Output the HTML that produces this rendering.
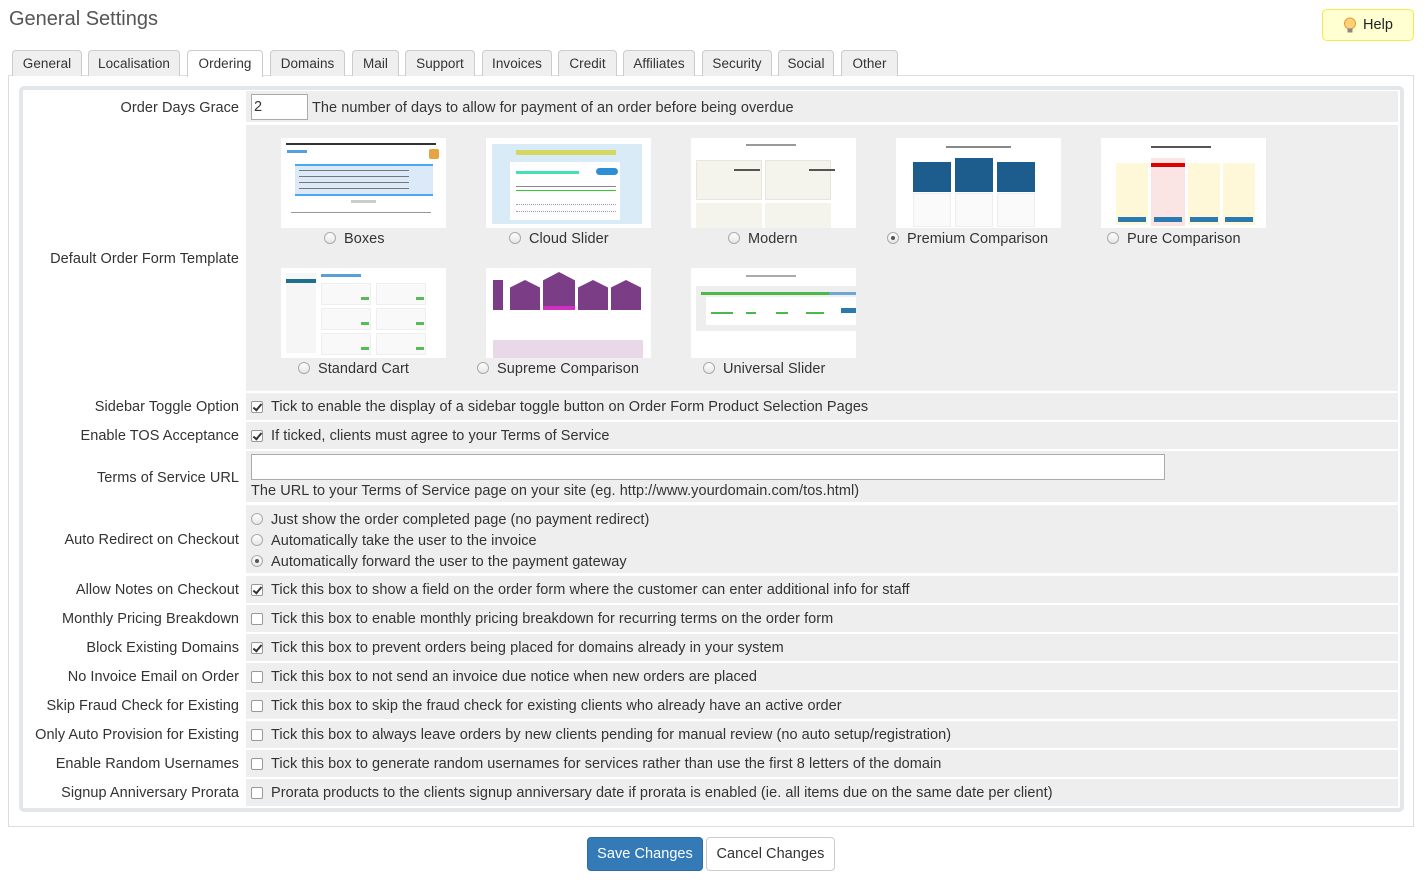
<!DOCTYPE html>
<html><head><meta charset="utf-8">
<style>
*{box-sizing:border-box;margin:0;padding:0}
body{width:1425px;height:882px;background:#fff;font-family:"Liberation Sans",sans-serif;font-size:14px;color:#333;position:relative;overflow:hidden;letter-spacing:0.05px}
.a{position:absolute}
h1{position:absolute;left:9px;top:8px;font-size:20px;font-weight:normal;color:#555;letter-spacing:0}
.help{position:absolute;left:1322px;top:9px;width:92px;height:32px;border:1px solid #f5e94a;background:#ffffd2;border-radius:5px;font-size:14.5px;color:#222;padding:7px 0 0 40px}
.tab{position:absolute;top:50px;height:26px;border:1px solid #ccc;border-bottom:none;background:#efefef;border-radius:4px 4px 0 0;text-align:center;font-size:13.5px;line-height:25px;color:#333}
.tab.on{background:#fff;height:27px;top:50px;z-index:2}
.panel{position:absolute;left:8px;top:75px;width:1406px;height:752px;border:1px solid #ddd}
.box{position:absolute;left:19px;top:86px;width:1385px;height:726px;border:4px solid #e3e7ea;border-radius:5px}
.lab{position:absolute;left:22px;width:217px;text-align:right;font-size:14.5px;color:#333;padding-top:2px}
.cell{position:absolute;left:246px;width:1152px;background:#eee}
.t{position:absolute;left:271px;font-size:14.5px;color:#333;white-space:nowrap;padding-top:2px}
.cb{position:absolute;left:251px;width:12px;height:12px;border:1px solid #999;border-radius:2px;background:#fff}
.cb.c::after{content:"";position:absolute;left:3px;top:0px;width:3px;height:7px;border:solid #333;border-width:0 2px 2px 0;transform:rotate(40deg)}
.rd{position:absolute;width:12px;height:12px;border:1px solid #aaa;border-radius:50%;background:linear-gradient(#fff,#e6e6e6)}
.rd.c::after{content:"";position:absolute;left:3px;top:3px;width:4px;height:4px;border-radius:50%;background:#555}
.th{position:absolute;width:165px;height:90px;background:#fff;overflow:hidden}
.tl{position:absolute;font-size:14.5px;color:#333;white-space:nowrap;padding-top:2px}
.btn{position:absolute;top:837px;height:34px;border-radius:4px;font-size:14.5px;line-height:32px;text-align:center}
</style></head><body>
<h1>General Settings</h1>
<div class="help"><svg class="a" style="left:20px;top:7px" width="14" height="17" viewBox="0 0 14 17"><circle cx="7" cy="6.5" r="5.5" fill="#ffd27a" stroke="#e89a2a"/><rect x="4.5" y="11.5" width="5" height="4" fill="#888"/></svg>Help</div>

<div class="panel"></div>
<div class="tab" style="left:12px;width:70px">General</div>
<div class="tab" style="left:88px;width:92px">Localisation</div>
<div class="tab on" style="left:187px;width:76px">Ordering</div>
<div class="tab" style="left:270px;width:75px">Domains</div>
<div class="tab" style="left:352px;width:47px">Mail</div>
<div class="tab" style="left:405px;width:70px">Support</div>
<div class="tab" style="left:482px;width:70px">Invoices</div>
<div class="tab" style="left:558px;width:59px">Credit</div>
<div class="tab" style="left:623px;width:72px">Affiliates</div>
<div class="tab" style="left:702px;width:70px">Security</div>
<div class="tab" style="left:778px;width:56px">Social</div>
<div class="tab" style="left:841px;width:57px">Other</div>

<div class="box"></div>

<div class="cell" style="top:91px;height:31px"></div>
<div class="lab" style="top:98px">Order Days Grace</div>
<div class="a" style="left:251px;top:94px;width:57px;height:26px;border:1px solid #aaa;background:#fff;font-size:14.5px;padding:4px 0 0 2px">2</div>
<div class="t" style="left:312px;top:98px">The number of days to allow for payment of an order before being overdue</div>

<div class="cell" style="top:125px;height:266px"></div>
<div class="lab" style="top:249px">Default Order Form Template</div>

<div class="th" style="left:281px;top:138px">
 <div class="a" style="left:5px;top:5px;width:150px;height:2px;background:#333"></div>
 <div class="a" style="left:6px;top:12px;width:20px;height:3px;background:#5aa0d8"></div>
 <div class="a" style="left:148px;top:11px;width:10px;height:10px;background:#e8a440;border-radius:2px"></div>
 <div class="a" style="left:14px;top:26px;width:138px;height:32px;background:#dbe9f8;border-top:2px solid #49a8ef;border-bottom:2px solid #49a8ef"></div>
 <div class="a" style="left:18px;top:32px;width:110px;height:1px;background:#777"></div>
 <div class="a" style="left:18px;top:38px;width:110px;height:1px;background:#777"></div>
 <div class="a" style="left:18px;top:44px;width:110px;height:1px;background:#777"></div>
 <div class="a" style="left:18px;top:50px;width:110px;height:1px;background:#777"></div>
 <div class="a" style="left:70px;top:62px;width:25px;height:3px;background:#ccc"></div>
 <div class="a" style="left:10px;top:74px;width:140px;height:1px;background:#999"></div>
</div>
<div class="rd" style="left:324px;top:232px"></div><div class="tl" style="left:344px;top:229px">Boxes</div>

<div class="th" style="left:486px;top:138px">
 <div class="a" style="left:6px;top:6px;width:150px;height:80px;background:#d9ebf7"></div>
 <div class="a" style="left:30px;top:12px;width:100px;height:5px;background:#d4d860"></div>
 <div class="a" style="left:24px;top:24px;width:110px;height:58px;background:#fff"></div>
 <div class="a" style="left:30px;top:33px;width:63px;height:3px;background:#47e0b0"></div>
 <div class="a" style="left:110px;top:30px;width:22px;height:7px;background:#2d8fd6;border-radius:4px"></div>
 <div class="a" style="left:30px;top:48px;width:100px;height:1px;background:#888"></div>
 <div class="a" style="left:30px;top:52px;width:100px;height:1px;background:#3c3"></div>
 <div class="a" style="left:30px;top:66px;width:100px;height:8px;border-top:1px dotted #99c;border-bottom:1px dotted #99c"></div>
</div>
<div class="rd" style="left:509px;top:232px"></div><div class="tl" style="left:529px;top:229px">Cloud Slider</div>

<div class="th" style="left:691px;top:138px">
 <div class="a" style="left:55px;top:6px;width:50px;height:2px;background:#999"></div>
 <div class="a" style="left:5px;top:22px;width:66px;height:40px;background:#f4f4ec;border:1px solid #e6e6dc"></div>
 <div class="a" style="left:74px;top:22px;width:66px;height:40px;background:#f4f4ec;border:1px solid #e6e6dc"></div>
 <div class="a" style="left:5px;top:65px;width:66px;height:25px;background:#f4f4ec"></div>
 <div class="a" style="left:74px;top:65px;width:66px;height:25px;background:#f4f4ec"></div>
 <div class="a" style="left:43px;top:31px;width:26px;height:2px;background:#555"></div>
 <div class="a" style="left:118px;top:31px;width:26px;height:2px;background:#555"></div>
</div>
<div class="rd" style="left:728px;top:232px"></div><div class="tl" style="left:748px;top:229px">Modern</div>

<div class="th" style="left:896px;top:138px">
 <div class="a" style="left:50px;top:8px;width:65px;height:2px;background:#888"></div>
 <div class="a" style="left:17px;top:24px;width:38px;height:30px;background:#1c5d8e"></div>
 <div class="a" style="left:59px;top:20px;width:38px;height:34px;background:#1c5d8e"></div>
 <div class="a" style="left:101px;top:24px;width:38px;height:30px;background:#1c5d8e"></div>
 <div class="a" style="left:17px;top:55px;width:38px;height:34px;background:#fafafa;border:1px solid #eee"></div>
 <div class="a" style="left:59px;top:55px;width:38px;height:34px;background:#fafafa;border:1px solid #eee"></div>
 <div class="a" style="left:101px;top:55px;width:38px;height:34px;background:#fafafa;border:1px solid #eee"></div>
</div>
<div class="rd c" style="left:887px;top:232px"></div><div class="tl" style="left:907px;top:229px">Premium Comparison</div>

<div class="th" style="left:1101px;top:138px">
 <div class="a" style="left:50px;top:8px;width:60px;height:2px;background:#555"></div>
 <div class="a" style="left:15px;top:25px;width:32px;height:62px;background:#fff8d8"></div>
 <div class="a" style="left:50px;top:20px;width:34px;height:68px;background:#fbe4e4"></div>
 <div class="a" style="left:50px;top:25px;width:34px;height:4px;background:#d00"></div>
 <div class="a" style="left:87px;top:25px;width:32px;height:62px;background:#fff8d8"></div>
 <div class="a" style="left:122px;top:25px;width:32px;height:62px;background:#fff8d8"></div>
 <div class="a" style="left:17px;top:79px;width:28px;height:5px;background:#2a7ab0"></div>
 <div class="a" style="left:53px;top:79px;width:28px;height:5px;background:#2a7ab0"></div>
 <div class="a" style="left:89px;top:79px;width:28px;height:5px;background:#2a7ab0"></div>
 <div class="a" style="left:124px;top:79px;width:28px;height:5px;background:#2a7ab0"></div>
</div>
<div class="rd" style="left:1107px;top:232px"></div><div class="tl" style="left:1127px;top:229px">Pure Comparison</div>

<div class="th" style="left:281px;top:268px">
 <div class="a" style="left:5px;top:5px;width:30px;height:80px;background:#f6f6f6"></div>
 <div class="a" style="left:5px;top:11px;width:30px;height:4px;background:#1f6f8e"></div>
 <div class="a" style="left:40px;top:6px;width:40px;height:3px;background:#5aa0d8"></div>
 <div class="a" style="left:40px;top:15px;width:50px;height:22px;background:#f9f9f9;border:1px solid #eee"></div>
 <div class="a" style="left:95px;top:15px;width:50px;height:22px;background:#f9f9f9;border:1px solid #eee"></div>
 <div class="a" style="left:40px;top:40px;width:50px;height:22px;background:#f9f9f9;border:1px solid #eee"></div>
 <div class="a" style="left:95px;top:40px;width:50px;height:22px;background:#f9f9f9;border:1px solid #eee"></div>
 <div class="a" style="left:40px;top:65px;width:50px;height:22px;background:#f9f9f9;border:1px solid #eee"></div>
 <div class="a" style="left:95px;top:65px;width:50px;height:22px;background:#f9f9f9;border:1px solid #eee"></div>
 <div class="a" style="left:80px;top:29px;width:8px;height:3px;background:#5cb85c"></div>
 <div class="a" style="left:135px;top:29px;width:8px;height:3px;background:#5cb85c"></div>
 <div class="a" style="left:80px;top:54px;width:8px;height:3px;background:#5cb85c"></div>
 <div class="a" style="left:135px;top:54px;width:8px;height:3px;background:#5cb85c"></div>
 <div class="a" style="left:80px;top:79px;width:8px;height:3px;background:#5cb85c"></div>
 <div class="a" style="left:135px;top:79px;width:8px;height:3px;background:#5cb85c"></div>
</div>
<div class="rd" style="left:298px;top:362px"></div><div class="tl" style="left:318px;top:359px">Standard Cart</div>

<div class="th" style="left:486px;top:268px">
 <div class="a" style="left:7px;top:12px;width:10px;height:30px;background:#7b3d86"></div>
 <div class="a" style="left:24px;top:12px;width:30px;height:30px;background:#7b3d86;clip-path:polygon(50% 0,100% 25%,100% 100%,0 100%,0 25%)"></div>
 <div class="a" style="left:57px;top:4px;width:32px;height:38px;background:#7b3d86;clip-path:polygon(50% 0,100% 22%,100% 100%,0 100%,0 22%)"></div>
 <div class="a" style="left:57px;top:38px;width:32px;height:4px;background:#d030c0"></div>
 <div class="a" style="left:92px;top:12px;width:30px;height:30px;background:#7b3d86;clip-path:polygon(50% 0,100% 25%,100% 100%,0 100%,0 25%)"></div>
 <div class="a" style="left:125px;top:12px;width:30px;height:30px;background:#7b3d86;clip-path:polygon(50% 0,100% 25%,100% 100%,0 100%,0 25%)"></div>
 <div class="a" style="left:7px;top:72px;width:150px;height:18px;background:#e9d8e8"></div>
</div>
<div class="rd" style="left:477px;top:362px"></div><div class="tl" style="left:497px;top:359px">Supreme Comparison</div>

<div class="th" style="left:691px;top:268px">
 <div class="a" style="left:55px;top:7px;width:50px;height:2px;background:#aaa"></div>
 <div class="a" style="left:5px;top:18px;width:160px;height:45px;background:#eee"></div>
 <div class="a" style="left:10px;top:24px;width:128px;height:3px;background:#4cb84c"></div>
 <div class="a" style="left:138px;top:24px;width:27px;height:3px;background:#6ca7d6"></div>
 <div class="a" style="left:15px;top:29px;width:150px;height:28px;background:#fff"></div>
 <div class="a" style="left:150px;top:40px;width:15px;height:5px;background:#2a7ab0"></div>
 <div class="a" style="left:20px;top:44px;width:22px;height:2px;background:#4cb84c"></div>
 <div class="a" style="left:55px;top:44px;width:10px;height:2px;background:#4cb84c"></div>
 <div class="a" style="left:85px;top:44px;width:12px;height:2px;background:#4cb84c"></div>
 <div class="a" style="left:115px;top:44px;width:18px;height:2px;background:#4cb84c"></div>
</div>
<div class="rd" style="left:703px;top:362px"></div><div class="tl" style="left:723px;top:359px">Universal Slider</div>

<div class="cell" style="top:393px;height:27px"></div>
<div class="lab" style="top:397px">Sidebar Toggle Option</div>
<div class="cb c" style="left:251px;top:401px"></div>
<div class="t" style="top:397px">Tick to enable the display of a sidebar toggle button on Order Form Product Selection Pages</div>

<div class="cell" style="top:422px;height:27px"></div>
<div class="lab" style="top:426px">Enable TOS Acceptance</div>
<div class="cb c" style="top:430px"></div>
<div class="t" style="top:426px">If ticked, clients must agree to your Terms of Service</div>

<div class="cell" style="top:451px;height:51px"></div>
<div class="lab" style="top:468px">Terms of Service URL</div>
<div class="a" style="left:251px;top:454px;width:914px;height:26px;border:1px solid #aaa;background:#fff"></div>
<div class="t" style="left:251px;top:481px">The URL to your Terms of Service page on your site (eg. http://www.yourdomain.com/tos.html)</div>

<div class="cell" style="top:505px;height:68px"></div>
<div class="lab" style="top:530px">Auto Redirect on Checkout</div>
<div class="rd" style="left:251px;top:513px"></div><div class="t" style="top:510px">Just show the order completed page (no payment redirect)</div>
<div class="rd" style="left:251px;top:534px"></div><div class="t" style="top:531px">Automatically take the user to the invoice</div>
<div class="rd c" style="left:251px;top:555px"></div><div class="t" style="top:552px">Automatically forward the user to the payment gateway</div>

<div class="cell" style="top:576px;height:27px"></div>
<div class="lab" style="top:580px">Allow Notes on Checkout</div>
<div class="cb c" style="top:584px"></div>
<div class="t" style="top:580px">Tick this box to show a field on the order form where the customer can enter additional info for staff</div>

<div class="cell" style="top:605px;height:27px"></div>
<div class="lab" style="top:609px">Monthly Pricing Breakdown</div>
<div class="cb" style="top:613px"></div>
<div class="t" style="top:609px">Tick this box to enable monthly pricing breakdown for recurring terms on the order form</div>

<div class="cell" style="top:634px;height:27px"></div>
<div class="lab" style="top:638px">Block Existing Domains</div>
<div class="cb c" style="top:642px"></div>
<div class="t" style="top:638px">Tick this box to prevent orders being placed for domains already in your system</div>

<div class="cell" style="top:663px;height:27px"></div>
<div class="lab" style="top:667px">No Invoice Email on Order</div>
<div class="cb" style="top:671px"></div>
<div class="t" style="top:667px">Tick this box to not send an invoice due notice when new orders are placed</div>

<div class="cell" style="top:692px;height:27px"></div>
<div class="lab" style="top:696px">Skip Fraud Check for Existing</div>
<div class="cb" style="top:700px"></div>
<div class="t" style="top:696px">Tick this box to skip the fraud check for existing clients who already have an active order</div>

<div class="cell" style="top:721px;height:27px"></div>
<div class="lab" style="top:725px">Only Auto Provision for Existing</div>
<div class="cb" style="top:729px"></div>
<div class="t" style="top:725px">Tick this box to always leave orders by new clients pending for manual review (no auto setup/registration)</div>

<div class="cell" style="top:750px;height:27px"></div>
<div class="lab" style="top:754px">Enable Random Usernames</div>
<div class="cb" style="top:758px"></div>
<div class="t" style="top:754px">Tick this box to generate random usernames for services rather than use the first 8 letters of the domain</div>

<div class="cell" style="top:779px;height:27px"></div>
<div class="lab" style="top:783px">Signup Anniversary Prorata</div>
<div class="cb" style="top:787px"></div>
<div class="t" style="top:783px">Prorata products to the clients signup anniversary date if prorata is enabled (ie. all items due on the same date per client)</div>

<div class="btn" style="left:587px;width:116px;background:#337ab7;border:1px solid #2e6da4;color:#fff">Save Changes</div>
<div class="btn" style="left:706px;width:129px;background:#fff;border:1px solid #ccc;color:#333">Cancel Changes</div>
</body></html>
